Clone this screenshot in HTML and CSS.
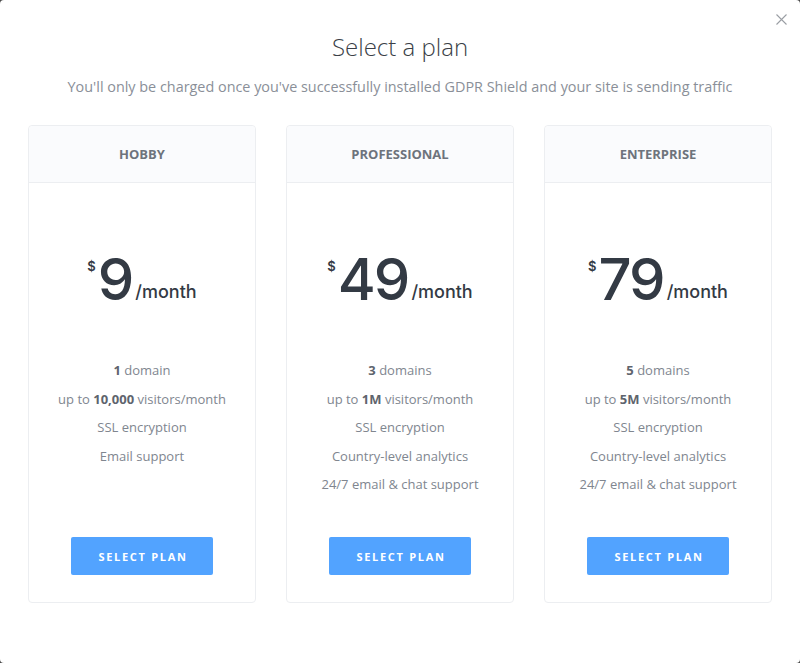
FILE: index.html
```html
<!DOCTYPE html>
<html>
<head>
<meta charset="utf-8">
<link rel="stylesheet" href="styles.css">
</head>
<body>
<div class="modal">
  <button class="close" aria-label="Close">
    <svg width="11" height="11" viewBox="0 0 11 11"><path d="M0.5 0.5L10.5 10.5M10.5 0.5L0.5 10.5" stroke="#9a9ea4" stroke-width="1.1" fill="none"/></svg>
  </button>
  <h1 class="title">Select a plan</h1>
  <p class="subtitle">You'll only be charged once you've successfully installed GDPR Shield and your site is sending traffic</p>
  <div class="plans">
    <div class="card">
      <div class="card-head">HOBBY</div>
      <div class="price"><span class="cur">$</span><span class="amt">9</span><span class="per">/month</span></div>
      <ul class="features">
        <li><b>1</b> domain</li>
        <li>up to <b>10,000</b> visitors/month</li>
        <li>SSL encryption</li>
        <li>Email support</li>
      </ul>
      <button class="btn">SELECT PLAN</button>
    </div>
    <div class="card">
      <div class="card-head">PROFESSIONAL</div>
      <div class="price"><span class="cur">$</span><span class="amt">49</span><span class="per">/month</span></div>
      <ul class="features">
        <li><b>3</b> domains</li>
        <li>up to <b>1M</b> visitors/month</li>
        <li>SSL encryption</li>
        <li>Country-level analytics</li>
        <li>24/7 email &amp; chat support</li>
      </ul>
      <button class="btn">SELECT PLAN</button>
    </div>
    <div class="card">
      <div class="card-head">ENTERPRISE</div>
      <div class="price"><span class="cur">$</span><span class="amt">79</span><span class="per">/month</span></div>
      <ul class="features">
        <li><b>5</b> domains</li>
        <li>up to <b>5M</b> visitors/month</li>
        <li>SSL encryption</li>
        <li>Country-level analytics</li>
        <li>24/7 email &amp; chat support</li>
      </ul>
      <button class="btn">SELECT PLAN</button>
    </div>
  </div>
</div>
</body>
</html>
```

FILE: styles.css
```css
html, body {
  margin: 0;
  padding: 0;
  background: #4a4a4a;
}
.modal {
  position: relative;
  width: 800px;
  height: 663px;
  box-sizing: border-box;
  background: #fff;
  border-radius: 4px;
  font-family: "Open Sans", "Noto Sans", sans-serif;
  padding: 30px 28px 0;
}
.close {
  position: absolute;
  top: 14px;
  right: 13px;
  border: 0;
  background: none;
  padding: 0;
  width: 11px;
  height: 11px;
  display: flex;
}
.title {
  margin: 0;
  text-align: center;
  font-weight: 300;
  font-size: 24px;
  line-height: 34px;
  color: #3a3f47;
}
.subtitle {
  margin: 13px 0 0;
  text-align: center;
  font-size: 14.4px;
  line-height: 20px;
  color: #8a8f98;
}
.plans {
  display: grid;
  grid-template-columns: repeat(3, 228px);
  column-gap: 30px;
  margin-top: 28px;
}
.card {
  height: 478px;
  box-sizing: border-box;
  border: 1px solid #eceef1;
  border-radius: 4px;
  display: flex;
  flex-direction: column;
  align-items: center;
}
.card-head {
  align-self: stretch;
  height: 57px;
  background: #fafbfd;
  border-bottom: 1px solid #eceef1;
  border-radius: 4px 4px 0 0;
  display: flex;
  align-items: center;
  justify-content: center;
  font-weight: 700;
  font-size: 13px;
  color: #6d737c;
  padding-bottom: 1px;
  box-sizing: border-box;
}
.price {
  margin-top: 66px;
  display: flex;
  align-items: flex-start;
  color: #333a44;
  font-family: "Inter", "DejaVu Sans", sans-serif;
  height: 60px;
}
.cur {
  font-size: 13px;
  font-weight: 600;
  margin-top: 9px;
  margin-right: 2px;
}
.amt {
  font-size: 58px;
  font-weight: 500;
  line-height: 60px;
  letter-spacing: -2px;
}
.per {
  font-size: 18px;
  line-height: 20px;
  align-self: flex-end;
  margin-bottom: 7px;
  margin-left: 3px;
  font-weight: 500;
}
.features {
  list-style: none;
  margin: 47px 0 0;
  padding: 0;
  text-align: center;
  font-size: 13px;
  line-height: 28.6px;
  color: #80868f;
}
.features b {
  color: #5e646d;
  font-weight: 700;
}
.btn {
  margin-top: auto;
  margin-bottom: 27px;
  width: 142px;
  height: 38px;
  border: 0;
  border-radius: 2px;
  background: #52a3ff;
  color: #fff;
  font-family: "Open Sans", sans-serif;
  font-weight: 700;
  font-size: 11px;
  letter-spacing: 1.7px;
  padding: 0 0 0 2px;
}
```
